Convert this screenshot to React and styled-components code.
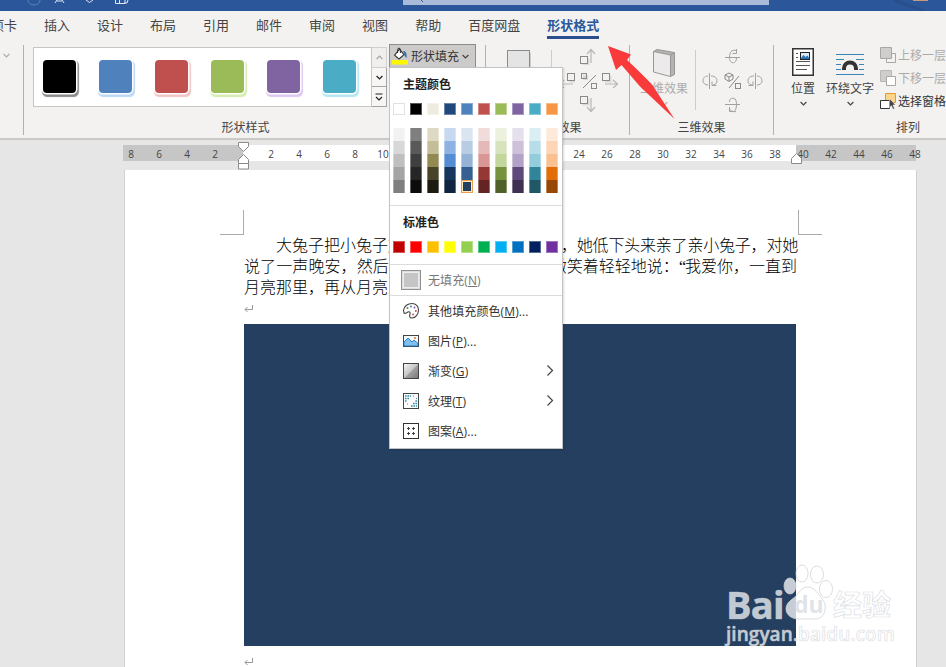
import React from 'react';
import styled, { createGlobalStyle } from 'styled-components';

const GlobalStyle = createGlobalStyle`
  * { box-sizing: border-box; }
  body { margin: 0; overflow: hidden; }
`;

const Screen = styled.div`
  position: relative;
  width: 946px;
  height: 667px;
  overflow: hidden;
  display: flex;
  flex-direction: column;
  background: #e6e6e6;
  color: #444;
  font-family: 'Open Sans', 'Noto Sans CJK SC', sans-serif;
  font-size: 12px;
  svg { display: block; flex: none; }
`;

/* ---------- title bar and tabs ---------- */
const TitleBar = styled.header`
  flex: none;
  display: flex;
  height: 11px;
  background: #2b579a;
`;
const QuickAccess = styled.div`width: 403px;`;
const SearchBox = styled.div`
  width: 366px;
  height: 5px;
  background: #a9bbd8;
`;
const TitleEnd = styled.div`flex: 1;`;

const TabBar = styled.nav`
  flex: none;
  display: flex;
  gap: 27px;
  height: 30px;
  margin-left: -9px;
`;
const TabStrip = styled.div`
  flex: none;
  background: #f3f2f1;
`;
const Tab = styled.span`
  height: 28px;
  padding-top: 5px;
  line-height: 18px;
  font-size: 13px;
  white-space: nowrap;
  color: ${(p) => (p.$active ? '#2b579a' : '#444')};
  font-weight: ${(p) => (p.$active ? 700 : 400)};
  border-bottom: 3px solid ${(p) => (p.$active ? '#2b4f8e' : 'transparent')};
`;

/* ---------- ribbon ---------- */
const Ribbon = styled.section`
  flex: none;
  display: flex;
  height: 99px;
  background: #f3f2f1;
  border-bottom: 2px solid #cbc9c7;
`;
const Group = styled.div`
  flex: none;
  width: ${(p) => p.$width}px;
  display: flex;
  flex-direction: column;
`;
const GroupBody = styled.div`
  display: flex;
  height: 79px;
`;
const GroupLabel = styled.div`
  height: 16px;
  line-height: 16px;
  text-align: center;
  padding-right: ${(p) => p.$shift || 0}px;
`;
const Separator = styled.div`
  flex: none;
  width: 1px;
  height: 90px;
  margin-top: 4px;
  background: #b4b2b0;
`;
const ShortSeparator = styled(Separator)`
  height: 60px;
  margin-top: 9px;
  background: #cfcdcb;
`;
const CutGroup = styled.div`
  width: 23px;
  flex: none;
  padding: 12px 0 0 3px;
`;

const Gallery = styled.div`
  display: flex;
  width: 339px;
  height: 60px;
  margin: 6px 0 0 9px;
  padding: 12px 0 0 9px;
  gap: 23px;
  background: #fff;
  border: 1px solid #c8c6c4;
`;
const StyleTile = styled.div`
  width: 33px;
  height: 33px;
  border-radius: 4px;
  background: ${(p) => p.$fill};
  box-shadow: 0 0 0 1.5px #fff, 1px 2px 1px 1.5px ${(p) => p.$glow};
`;
const GalleryScroll = styled.div`
  display: flex;
  flex-direction: column;
  width: 15px;
  height: 60px;
  margin-top: 6px;
`;
const ScrollCell = styled.div`
  flex: 1;
  display: flex;
  align-items: center;
  justify-content: center;
  border: 1px solid ${(p) => (p.$dim ? '#d2d0ce' : '#a5a3a1')};
  border-left-width: 0;
  background: ${(p) => (p.$dim ? '#f0efee' : '#f7f6f5')};
  & + & { border-top-width: ${(p) => (p.$last ? 0 : 1)}px; }
`;
const FillButton = styled.button`
  display: flex;
  align-items: center;
  width: 87px;
  height: 24px;
  margin: 3px 0 0 2px;
  padding: 0 0 0 2px;
  gap: 3px;
  font: inherit;
  color: #333;
  white-space: nowrap;
  background: #cdcbc9;
  border: 1px solid #8f8d8b;
`;

const BigButton = styled.div`
  display: flex;
  flex-direction: column;
  align-items: center;
  width: ${(p) => p.$width}px;
  margin-left: ${(p) => p.$left || 0}px;
  padding-top: 7px;
  padding-left: ${(p) => p.$nudge || 0}px;
  color: ${(p) => (p.$disabled ? '#adabaa' : '#444')};
  white-space: nowrap;
`;
const BigIcon = styled.div`
  height: 32px;
  display: flex;
  align-items: ${(p) => (p.$center ? 'center' : 'flex-start')};
  justify-content: center;
`;
const BigText = styled.div`
  height: 18px;
  line-height: 18px;
  margin-bottom: 3px;
`;
const NudgeGrid = styled.div`
  display: grid;
  grid-template-columns: repeat(3, 22px);
  grid-template-rows: repeat(3, 24px);
  place-items: center;
  height: 72px;
  margin: 3px 0 0 3px;
`;
const ArrangeList = styled.div`
  display: flex;
  flex-direction: column;
  gap: 1px;
  margin: 3px 0 0 6px;
`;
const ArrangeRow = styled.div`
  display: flex;
  align-items: center;
  height: 22px;
  gap: 1px;
  white-space: nowrap;
  color: ${(p) => (p.$disabled ? '#adabaa' : '#333')};
`;

/* ---------- ruler ---------- */
const RulerArea = styled.div`
  flex: none;
  position: relative;
  height: 30px;
  padding: 5px 0 0 123px;
`;
const RulerBar = styled.div`
  display: flex;
  width: 793px;
  height: 16px;
  background: linear-gradient(90deg, #c6c6c6 120px, #fff 120px, #fff 673px, #c6c6c6 673px);
`;
const RulerNumbers = styled.div`
  display: flex;
  margin-left: -6px;
`;
const RulerNumber = styled.span`
  flex: none;
  width: 28px;
  text-align: center;
  line-height: 18px;
  font-size: 10px;
  color: #444;
`;
const Marker = styled.svg`
  position: absolute;
  left: ${(p) => p.$x}px;
  top: ${(p) => p.$y}px;
`;

/* ---------- document ---------- */
const Page = styled.main`
  flex: 1;
  width: 793px;
  margin-left: 124px;
  padding-top: 40px;
  background: #fff;
  border-left: 1px solid #d0d0d0;
  border-right: 1px solid #d0d0d0;
`;
const Crops = styled.div`
  display: flex;
  justify-content: space-between;
  height: 25px;
  padding: 0 94px 0 95px;
`;
const CropMark = styled.div`
  width: 24px;
  height: 25px;
  border-bottom: 1px solid #ababab;
  ${(p) => (p.$side === 'left' ? 'border-right' : 'border-left')}: 1px solid #ababab;
`;
const Paragraph = styled.div`
  margin-left: 119px;
  font-family: 'Noto Sans CJK SC', sans-serif;
  font-size: 16px;
  color: #000;
`;
const TextBlock = styled.div`
  height: 63px;
  margin: -1px 0 1px;
  font-weight: 300;
`;
const Line = styled.div`
  display: flex;
  justify-content: space-between;
  width: 554px;
  height: 21px;
  line-height: 21px;
  white-space: nowrap;
  padding-left: ${(p) => p.$indent || 0}px;
`;
const Run = styled.span`
  letter-spacing: ${(p) => p.$track || 0}px;
  margin-right: ${(p) => p.$end || 0}px;
`;
const Quote = styled.span`
  font-family: 'Liberation Serif', serif;
  margin-right: -1px;
`;
const ReturnRow = styled.div`
  height: 26px;
  padding: ${(p) => p.$top}px 0 0 0;
`;
const Shape = styled.div`
  width: 552px;
  height: 322px;
  background: #243f60;
`;

/* ---------- fill menu ---------- */
const Menu = styled.div`
  position: absolute;
  left: 389px;
  top: 67px;
  width: 174px;
  height: 382px;
  background: #fff;
  border: 1px solid #c3c3c3;
  box-shadow: 1px 1px 2px rgba(0, 0, 0, 0.15);
  color: #333;
`;
const MenuTitle = styled.div`
  height: 35px;
  padding: 8px 0 0 13px;
  line-height: 18px;
  font-weight: 700;
  color: #222;
`;
const SwatchRow = styled.div`
  display: flex;
  gap: 5px;
  padding-left: 3px;
  height: 12px;
  margin-bottom: ${(p) => p.$after}px;
`;
const Swatch = styled.div`
  width: 12px;
  height: 12px;
  background: ${(p) => p.$c};
  border: 1px solid ${(p) => (p.$c === '#ffffff' ? '#e1e1e1' : '#ffffff55')};
`;
const Shade = styled.div`
  width: 12px;
  height: 13px;
  background: ${(p) => p.$c};
  border: solid #ffffff55;
  border-width: 0 1px;
  ${(p) => p.$selected && `
    border: 1px solid #e8a04c;
    box-shadow: inset 0 0 0 1px #fde9b8;
  `}
`;
const ShadeRow = styled.div`
  display: flex;
  gap: 5px;
  height: 13px;
  padding-left: 3px;
`;
const Rule = styled.div`
  height: 1px;
  margin-top: ${(p) => p.$top || 0}px;
  background: #dcdcdc;
`;
const MenuItem = styled.div`
  display: flex;
  align-items: center;
  height: 30px;
  padding: 0 8px 0 11px;
  color: ${(p) => (p.$dim ? '#777' : '#333')};
`;
const ItemIcon = styled.div`
  width: 20px;
  margin-right: 7px;
  display: flex;
  justify-content: center;
`;
const ItemText = styled.span`
  flex: 1;
  white-space: nowrap;
  letter-spacing: 0.1px;
`;

/* ---------- overlays ---------- */
const PointerArrow = styled.svg`
  position: absolute;
  left: 600px;
  top: 40px;
`;
const Watermark = styled.div`
  position: absolute;
  left: 726px;
  top: 564px;
  width: 175px;
  color: rgba(255, 255, 255, 0.74);
  -webkit-text-stroke: 0.7px rgba(205, 208, 214, 0.7);
`;
const Brand = styled.div`
  display: flex;
  align-items: flex-end;
  height: 57px;
`;
const Latin = styled.span`
  width: 55px;
  font: 700 38px/38px 'Open Sans', sans-serif;
  letter-spacing: -0.8px;
  margin-bottom: -2px;
`;
const Paw = styled.div`
  position: relative;
  width: 52px;
  height: 58px;
`;
const PawText = styled.span`
  position: absolute;
  left: 13px;
  top: 28px;
  font: 700 23px/26px 'Open Sans', sans-serif;
  color: rgba(214, 218, 224, 0.75);
  -webkit-text-stroke: 0;
`;
const Han = styled.span`
  font: 700 29px/32px 'Noto Sans CJK SC', sans-serif;
  margin-bottom: 2px;
`;
const Site = styled.div`
  margin-top: 1px;
  font: 600 19px/24px 'Open Sans', sans-serif;
  letter-spacing: 0.05px;
  white-space: nowrap;
`;

/* ---------- icons ---------- */
const Chevron = ({ color = '#444', flip }) => (
  <svg width="7" height="5" viewBox="0 0 7 5" fill="none" stroke={color} strokeWidth="1.2">
    <path d={flip ? 'M.6 4 3.5 1 6.4 4' : 'M.6 1 3.5 4 6.4 1'} />
  </svg>
);
const BucketIcon = () => (
  <svg width="16" height="18" viewBox="0 0 16 18">
    <path d="M7.5 2.2 12 7.6 7 12 2.6 8.2Z" fill="#fff" stroke="#333" strokeWidth="1.1" />
    <path d="M5.6 6V2.4C5.6.8 8.4.8 8.4 2.4V6" fill="none" stroke="#333" />
    <path d="M11 4c3 0 4 2.5 3.6 7-2-1-2-3.500-2.400-4.500Z" fill="#2f6fae" />
    <path d="M0 13h16v4.500H0z" fill="#fdf800" />
  </svg>
);
const NUDGE_ARROWS = {
  up: { box: [0.5, 8.5], arrow: 'M11 15V2M7 6l4-4.500L15 6' },
  left: { box: [9.5, 1.5], arrow: 'M15 12H3M6 8l-4 4 4 4' },
  right: { box: [0.5, 1.5], arrow: 'M3 12h12M11 8l4.500 4-4.500 4' },
  down: { box: [0.5, 0.5], arrow: 'M11 2v13M7 11l4 4.500L15 11' },
};
const NudgeIcon = ({ dir }) => {
  const { box, arrow } = NUDGE_ARROWS[dir];
  return (
    <svg width="17" height="17" viewBox="0 0 17 17" fill="none">
      <rect x={box[0] + 2} y={box[1] + 2} width="7" height="7" fill="#dcdad8" />
      <path d={arrow} stroke="#b9b7b5" strokeWidth="1.2" />
      <rect x={box[0]} y={box[1]} width="7" height="7" fill="#f3f2f1" stroke="#8c8a88" />
    </svg>
  );
};
const ToggleShadowIcon = () => (
  <svg width="17" height="17" viewBox="0 0 17 17" fill="none" stroke="#8c8a88">
    <rect x="3" y="3" width="5" height="5" fill="#dcdad8" stroke="none" />
    <rect x="1.5" y="1.5" width="5" height="5" />
    <rect x="11.5" y="11.5" width="5" height="5" />
    <path d="M3 16 16 3" />
  </svg>
);
const TILTS = {
  up: 'M1 9.500h15M12 2.500C7.500 1 5.500 5 5.500 9s1.500 6.500 5 5.500M12.500 1v4.500H8.500M10.500 14.500c1.500-1 2-3 2-5',
  left: 'M7.500 1v16M6 4C2 4 1 7 1 9s2 4 5 4M9 4c5 0 6 3 6 5 0 3-3 4-4.500 4M10 9.500v4h4.500',
  right: 'M9.500 1v16M11 4c4 0 5 3 5 5s-2 4-5 4M8 4C3 4 2 7 2 9c0 3 3 4 4.500 4M7 9.500v4H2.500',
  down: 'M1 8.500h15M12 15.500c-4.500 1-6.500-2-6.500-3M10 2.500c3 0 3.500 10 .500 12.500M5.500 6c0-3 2-4.500 4.500-3.500M5.500 11v4.500H10',
};
const TiltIcon = ({ dir }) => (
  <svg width="17" height="17" viewBox="0 0 17 17" fill="none" stroke="#a3a1a0">
    <path d={TILTS[dir]} />
  </svg>
);
const ToggleTiltIcon = () => (
  <svg width="17" height="17" viewBox="0 0 17 17" fill="none" stroke="#8c8a88">
    <path d="M1 3l4-2 4 2v4L5 9.500 1 7ZM1 3l4 2 4-2M5 5v4M5 16 15 4" />
    <rect x="11.5" y="11.5" width="5" height="5" />
  </svg>
);
const ShadowIcon = () => (
  <svg width="28" height="28" viewBox="0 0 28 28">
    <path d="M5 5h21v21H5z" fill="#cfcdcb" />
    <rect x="2.5" y="2.5" width="22" height="22" fill="#e4e4e4" stroke="#8c8a88" />
  </svg>
);
const SlabIcon = () => (
  <svg width="24" height="30" viewBox="0 0 24 30" stroke="#999796" strokeLinejoin="round">
    <path d="M1.500 3.500 5 1.500 22.500 4.500v22l-4 2Z" fill="#b5b3b2" />
    <path d="M1.500 3.500 18.500 7v21.500L1.500 24Z" fill="#eceaea" />
    <path d="M18.500 7 22.500 4.500" />
  </svg>
);
const PositionIcon = () => (
  <svg width="22" height="28" viewBox="0 0 22 28" fill="none">
    <rect x=".75" y=".75" width="20.5" height="26.5" fill="#fff" stroke="#333" strokeWidth="1.5" />
    <path d="M4 5.500h2M4 9.500h2M4 13.500h14M4 17.500h14M4 21.500h11" stroke="#555" />
    <rect x="8.5" y="4.5" width="9" height="7" fill="#d8ecf8" stroke="#222" />
    <path d="m9 10 2.500-3 2 2 2-1.500L17 10v1H9Z" fill="#2a73b8" />
  </svg>
);
const WrapIcon = () => (
  <svg width="28" height="23" viewBox="0 0 28 23" fill="none">
    <path d="M0 1.500h28M0 6.500h8M20 6.500h8M0 11.500h5M23 11.500h5M0 16.500h5M23 16.500h5M0 21.500h28" stroke="#3b86b8" />
    <path d="M8 17v-1.500a6 6 0 0 1 12 0V17" stroke="#333" strokeWidth="4" />
  </svg>
);
const ForwardIcon = () => (
  <svg width="17" height="17" viewBox="0 0 17 17">
    <path d="M6.500 6.500h9v9h-9z" fill="#f3f2f1" stroke="#a9a7a6" />
    <path d="M.5.500h11v11H.5z" fill="#d0cecd" stroke="#a9a7a6" />
  </svg>
);
const BackwardIcon = () => (
  <svg width="17" height="17" viewBox="0 0 17 17">
    <path d="M.5.500h11v11H.5z" fill="#d0cecd" stroke="#b9b7b6" />
    <path d="M6.500 6.500h9v9h-9z" fill="#fff" stroke="#a9a7a6" />
  </svg>
);
const SelectionIcon = () => (
  <svg width="17" height="17" viewBox="0 0 17 17">
    <path d="M5.500.500h10v9h-10z" fill="#fbd48a" stroke="#e29a2e" />
    <path d="M.5 7.500h9v8h-9z" fill="#fff" stroke="#333" />
    <path d="M9.500 5.500 15.500 12h-2.500l1.500 3.500-1.500.8-1.600-3.500-1.900 1.700Z" fill="#444" stroke="#fff" strokeWidth=".5" />
  </svg>
);
const PaletteIcon = () => (
  <svg width="18" height="18" viewBox="0 0 18 18">
    <path d="M1.500 8.500C2 4 6 1.500 10 1.500c4 0 6.500 3 6.500 6.500 0 4.500-3 8-6.500 8-3 0-2.500-2.500-2-4 .6-1.800-.8-2.800-2.200-2S2.500 12 2 11Z" fill="#fff" stroke="#444" strokeWidth="1.1" />
    <g>
      <circle cx="5.5" cy="6" r="1" fill="#4a8f4a" />
      <circle cx="9" cy="4.5" r="1" fill="#3b78b5" />
      <circle cx="12.5" cy="5.5" r="1" fill="#8a5fb0" />
      <circle cx="13.8" cy="9" r="1" fill="#d05050" />
      <circle cx="11" cy="12.5" r="1" fill="#d05050" />
    </g>
  </svg>
);
const PictureIcon = () => (
  <svg width="16" height="12" viewBox="0 0 16 12">
    <rect x=".5" y=".5" width="15" height="11" fill="#f3f9fd" stroke="#444" />
    <path d="m1 7 4-4 4 4 2-2 4 3.500V11H1Z" fill="#7ec0ee" stroke="#1f77bf" strokeWidth=".9" />
    <circle cx="12" cy="3" r="1.1" fill="#e77b34" />
  </svg>
);
const GradientIcon = () => (
  <svg width="16" height="16" viewBox="0 0 16 16">
    <defs>
      <linearGradient id="shine" x1="0" y1="0" x2="1" y2="1">
        <stop offset="0" stopColor="#fafafa" />
        <stop offset=".5" stopColor="#c4c4c4" />
        <stop offset=".52" stopColor="#a2a2a2" />
        <stop offset="1" stopColor="#777" />
      </linearGradient>
    </defs>
    <rect x=".5" y=".5" width="15" height="15" fill="url(#shine)" stroke="#444" />
  </svg>
);
const TextureIcon = () => (
  <svg width="16" height="16" viewBox="0 0 16 16">
    <rect x=".5" y=".5" width="15" height="15" fill="#fff" stroke="#444" />
    <g stroke="#2b8fa8" strokeWidth="1.6">
      <path d="M2 3h6M2 5.500h4M2 8h1.600M12.400 8H14M10 10.500h4M8 13h6" strokeDasharray="1.6 .8" />
      <path d="M10 3h1M4 11h1M13 5.500h1" strokeWidth="1" />
    </g>
  </svg>
);
const PatternIcon = () => (
  <svg width="16" height="16" viewBox="0 0 16 16" fill="none" stroke="#333">
    <rect x=".5" y=".5" width="15" height="15" fill="#fff" />
    <path d="M4 5.500h3M5.500 4v3M9 5.500h3M10.500 4v3M4 10.500h3M5.500 9v3M9 10.500h3M10.500 9v3" strokeWidth=".9" />
  </svg>
);
const NoFillIcon = () => (
  <svg width="20" height="20" viewBox="0 0 20 20">
    <rect x=".5" y=".5" width="19" height="19" fill="#dedede" stroke="#919191" />
    <rect x="2.5" y="2.5" width="15" height="15" fill="#c5c5c5" stroke="#eee" />
  </svg>
);
const ReturnMark = () => (
  <svg width="9" height="8" viewBox="0 0 9 8" fill="none" stroke="#999">
    <path d="M8.500 0v4.500H1M3.500 2 1 4.500 3.500 7" />
  </svg>
);

/* ---------- data ---------- */
const TABS = ['项卡', '插入', '设计', '布局', '引用', '邮件', '审阅', '视图', '帮助', '百度网盘', '形状格式'];
const STYLES = [
  ['#000000', '#8b8b8b'],
  ['#4f81bd', '#bcd8f5'],
  ['#c0504d', '#f3c4c4'],
  ['#9bbb59', '#d5edb0'],
  ['#8064a2', '#dcc8f2'],
  ['#4bacc6', '#b4e6f2'],
];
const THEME = ['#ffffff', '#000000', '#eeece1', '#1f497d', '#4f81bd', '#c0504d', '#9bbb59', '#8064a2', '#4bacc6', '#f79646'];
const SHADES = [
  ['#f2f2f2', '#7f7f7f', '#ddd9c3', '#c6d9f0', '#dbe5f1', '#f2dcdb', '#ebf1dd', '#e5e0ec', '#dbeef3', '#fdeada'],
  ['#d8d8d8', '#595959', '#c4bd97', '#8db3e2', '#b8cce4', '#e5b9b7', '#d7e3bc', '#ccc1d9', '#b7dde8', '#fbd5b5'],
  ['#bfbfbf', '#3f3f3f', '#938953', '#548dd4', '#95b3d7', '#d99694', '#c3d69b', '#b2a2c7', '#92cddc', '#fac08f'],
  ['#a5a5a5', '#262626', '#494429', '#17365d', '#366092', '#953734', '#76923c', '#5f497a', '#31859b', '#e36c09'],
  ['#7f7f7f', '#0c0c0c', '#1d1b10', '#0f243e', '#244061', '#632423', '#4f6128', '#3f3151', '#205867', '#974806'],
];
const STANDARD = ['#c00000', '#ff0000', '#ffc000', '#ffff00', '#92d050', '#00b050', '#00b0f0', '#0070c0', '#002060', '#7030a0'];
const RULER = Array.from({ length: 29 }, (_, i) => Math.abs(i * 2 - 8));

const MENU_ITEMS = [
  { icon: <PaletteIcon />, label: '其他填充颜色', hotkey: 'M', tail: '...' },
  { icon: <PictureIcon />, label: '图片', hotkey: 'P', tail: '...' },
  { icon: <GradientIcon />, label: '渐变', hotkey: 'G', submenu: true },
  { icon: <TextureIcon />, label: '纹理', hotkey: 'T', submenu: true },
  { icon: <PatternIcon />, label: '图案', hotkey: 'A', tail: '...' },
];

function Item({ icon, label, hotkey, tail, submenu, dim }) {
  return (
    <MenuItem $dim={dim}>
      <ItemIcon>{icon}</ItemIcon>
      <ItemText>{label}(<u>{hotkey}</u>){tail}</ItemText>
      {submenu && (
        <svg width="8" height="12" viewBox="0 0 8 12" fill="none" stroke="#444" strokeWidth="1.2">
          <path d="M1.500 .5 6.500 5.500 1.500 10.500" />
        </svg>
      )}
    </MenuItem>
  );
}

function FillMenu() {
  return (
    <Menu>
      <MenuTitle>主题颜色</MenuTitle>
      <SwatchRow $after={13}>{THEME.map((c) => <Swatch key={c} $c={c} />)}</SwatchRow>
      {SHADES.map((row, r) => (
        <ShadeRow key={r}>
          {row.map((c, i) => <Shade key={i} $c={c} $selected={r === 4 && i === 4} />)}
        </ShadeRow>
      ))}
      <Rule $top={12} />
      <MenuTitle>标准色</MenuTitle>
      <SwatchRow $after={11}>{STANDARD.map((c) => <Swatch key={c} $c={c} />)}</SwatchRow>
      <Rule />
      <Item icon={<NoFillIcon />} label="无填充" hotkey="N" dim />
      <Rule />
      {MENU_ITEMS.map((item) => <Item key={item.hotkey} {...item} />)}
    </Menu>
  );
}

export default function App() {
  return (
    <Screen lang="zh-CN">
      <GlobalStyle />
      <TitleBar>
        <QuickAccess>
          <svg width="140" height="6" viewBox="0 0 140 6" fill="none" stroke="#dfe7f3">
            <path d="M28 0a6 5 0 0 0 12 0" stroke="#5f80b5" />
            <path d="m55 3 2-3M64 3l-2-3M57 1h5M86 0l3.500 2.500L93 0M115.500 0v3.500h4V0M119 3.500h6V0M124 3h3l1-3" />
          </svg>
        </QuickAccess>
        <SearchBox>
          <svg width="30" height="3" viewBox="0 0 30 3"><path d="m18 0 2 2" stroke="#2b579a" /></svg>
        </SearchBox>
        <TitleEnd>
          <svg width="177" height="11" viewBox="0 0 177 11" fill="none">
            <path d="M125 0l30 11" stroke="#284f8c" strokeWidth="3" />
            <path d="M144 0h15" stroke="#c99a78" strokeWidth="2" />
          </svg>
        </TitleEnd>
      </TitleBar>

      <TabStrip>
        <TabBar>
          {TABS.map((t) => <Tab key={t} $active={t === '形状格式'}>{t}</Tab>)}
        </TabBar>
      </TabStrip>

      <Ribbon>
        <CutGroup><Chevron color="#b0aeac" /></CutGroup>
        <Separator />
        <Group $width={461}>
          <GroupBody>
            <Gallery>
              {STYLES.map(([fill, glow]) => <StyleTile key={fill} $fill={fill} $glow={glow} />)}
            </Gallery>
            <GalleryScroll>
              <ScrollCell $dim><Chevron flip color="#a9a7a5" /></ScrollCell>
              <ScrollCell><Chevron color="#222" /></ScrollCell>
              <ScrollCell $last>
                <svg width="8" height="8" viewBox="0 0 8 8" fill="none" stroke="#222" strokeWidth="1.2">
                  <path d="M.5 1h7M1 4l3 3 3-3" />
                </svg>
              </ScrollCell>
            </GalleryScroll>
            <FillButton>
              <BucketIcon />
              形状填充
              <Chevron />
            </FillButton>
          </GroupBody>
          <GroupLabel $shift={18}>形状样式</GroupLabel>
        </Group>
        <Separator />
        <Group $width={143}>
          <GroupBody>
            <BigButton $width={65}><BigIcon><ShadowIcon /></BigIcon></BigButton>
            <ShortSeparator />
            <NudgeGrid>
              <i /><NudgeIcon dir="up" /><i />
              <NudgeIcon dir="left" /><ToggleShadowIcon /><NudgeIcon dir="right" />
              <i /><NudgeIcon dir="down" /><i />
            </NudgeGrid>
          </GroupBody>
          <GroupLabel>阴影效果</GroupLabel>
        </Group>
        <Separator />
        <Group $width={143}>
          <GroupBody>
            <BigButton $width={65} $nudge={3} $disabled>
              <BigIcon><SlabIcon /></BigIcon>
              <BigText>三维效果</BigText>
              <Chevron color="#bbb9b8" />
            </BigButton>
            <ShortSeparator />
            <NudgeGrid>
              <i /><TiltIcon dir="up" /><i />
              <TiltIcon dir="left" /><ToggleTiltIcon /><TiltIcon dir="right" />
              <i /><TiltIcon dir="down" /><i />
            </NudgeGrid>
          </GroupBody>
          <GroupLabel>三维效果</GroupLabel>
        </Group>
        <Separator />
        <Group $width={268}>
          <GroupBody>
            <BigButton $width={26} $left={16}>
              <BigIcon><PositionIcon /></BigIcon>
              <BigText>位置</BigText>
              <Chevron />
            </BigButton>
            <BigButton $width={48} $left={10}>
              <BigIcon $center><WrapIcon /></BigIcon>
              <BigText>环绕文字</BigText>
              <Chevron />
            </BigButton>
            <ArrangeList>
              <ArrangeRow $disabled><ForwardIcon />上移一层</ArrangeRow>
              <ArrangeRow $disabled><BackwardIcon />下移一层</ArrangeRow>
              <ArrangeRow><SelectionIcon />选择窗格</ArrangeRow>
            </ArrangeList>
          </GroupBody>
          <GroupLabel>排列</GroupLabel>
        </Group>
      </Ribbon>

      <RulerArea>
        <RulerBar>
          <RulerNumbers>
            {RULER.map((n, i) => <RulerNumber key={i}>{n || ''}</RulerNumber>)}
          </RulerNumbers>
        </RulerBar>
        <Marker $x={238} $y={2} width="11" height="28" viewBox="0 0 11 28" fill="#fff" stroke="#8a8a8a">
          <path d="M.5.500h10v4L5.500 9.500.5 4.500ZM.5 17.500 5.500 12.500 10.500 17.500v4H.5ZM.5 21.500h10v5.500H.5Z" />
        </Marker>
        <Marker $x={791} $y={13} width="11" height="11" viewBox="0 0 11 11" fill="#fff" stroke="#8a8a8a">
          <path d="M.5 5.500 5.500.500 10.500 5.500v5H.5Z" />
        </Marker>
      </RulerArea>

      <Page>
        <Crops><CropMark $side="left" /><CropMark $side="right" /></Crops>
        <Paragraph>
          <TextBlock>
            <Line $indent={32}>
              <Run>大兔子把小兔子放</Run>
              <Run $track={-0.2}>，她低下头来亲了亲小兔子，对她</Run>
            </Line>
            <Line>
              <Run $track={0.1}>说了一声晚安，然后</Run>
              <Run $end={1}>微笑着轻轻地说：<Quote>“</Quote>我爱你，一直到</Run>
            </Line>
            <Line><Run>月亮那里，再从月亮上</Run></Line>
          </TextBlock>
          <ReturnRow $top={7}><ReturnMark /></ReturnRow>
          <Shape />
          <ReturnRow $top={12}><ReturnMark /></ReturnRow>
        </Paragraph>
      </Page>

      <FillMenu />

      <PointerArrow width="80" height="82" viewBox="0 0 80 82">
        <path d="M8 6 31 14.500 27 20 Q38 30 52 44.500 L74.500 79 40 46.500 21.500 25 16 30Z" fill="#f83a3a" />
      </PointerArrow>

      <Watermark>
        <Brand>
          <Latin>Bai</Latin>
          <Paw>
            <svg width="54" height="58" viewBox="0 0 54 58" fill="rgba(255,255,255,.74)" stroke="rgba(205,208,214,.75)" strokeWidth="1">
              <ellipse cx="9" cy="23" rx="6" ry="8" />
              <ellipse cx="21" cy="10.5" rx="6" ry="8.5" />
              <ellipse cx="36" cy="11.5" rx="6.500" ry="8.5" />
              <ellipse cx="45" cy="26" rx="6.5" ry="8.5" />
              <path d="M27 24c5 0 9 5 12 9 4 5 6 8 5 14-1 6-5 9-10 9H17c-6 0-12-4-12-10 0-7 7-10 10-13 3-4 6-9 12-9Z" />
            </svg>
            <PawText>du</PawText>
          </Paw>
          <Han>经验</Han>
        </Brand>
        <Site>jingyan.baidu.com</Site>
      </Watermark>
    </Screen>
  );
}
